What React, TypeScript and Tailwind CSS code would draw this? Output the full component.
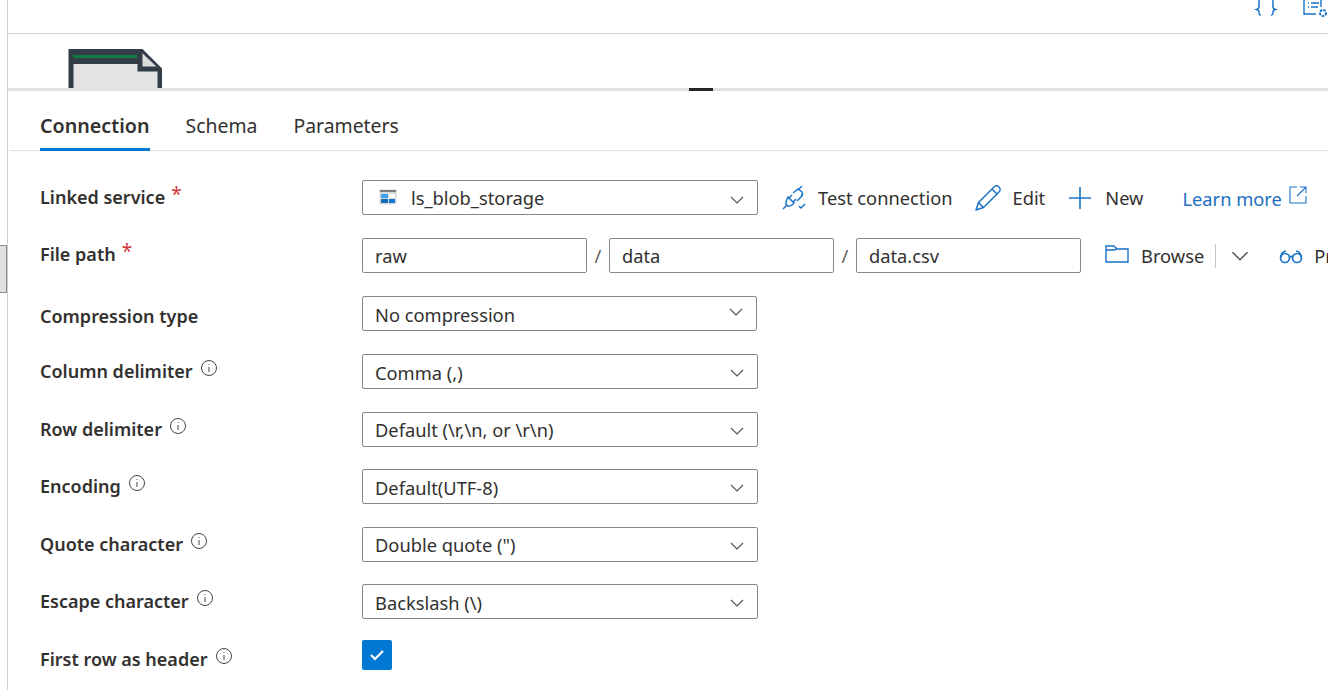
import React from "react";

const Chevron = ({ className = "" }: { className?: string }) => (
  <svg width="14" height="8" viewBox="0 0 14 8" fill="none" stroke="#505050" strokeWidth="1.1" className={`shrink-0 ${className}`}>
    <path d="M1 1l6 6 6-6" />
  </svg>
);

const Info = () => (
  <svg width="18" height="18" viewBox="0 0 18 18" fill="none" stroke="#444" strokeWidth="1">
    <circle cx="9" cy="9" r="7.5" />
    <path d="M9 8v5" />
    <circle cx="9" cy="5.5" r="0.6" fill="#444" stroke="none" />
  </svg>
);

const Select = ({ text, icon, w = "w-[396px]", chevronClass = "mt-[2px]", textClass = "pt-[3px]" }: { text: string; icon?: boolean; w?: string; chevronClass?: string; textClass?: string }) => (
  <div className={`${w} shrink-0 h-[35px] border border-[#8a8886] rounded-[2px] flex items-center pl-[12px] pr-[13px] text-[#323130]`}>
    {icon && (
      <svg width="18" height="16" viewBox="0 0 18 16" className="mr-[14px] ml-[4px] -mt-[2px] shrink-0">
        <rect x="0.5" y="0.5" width="17" height="15" fill="#d9d9d9" />
        <rect x="1" y="1" width="16" height="2" fill="#7a7a7a" />
        <rect x="2" y="5" width="7" height="4" fill="#3aa0e8" />
        <rect x="10" y="5" width="6" height="4" fill="#fff" />
        <rect x="2" y="10" width="7" height="4" fill="#0f6cbd" />
        <rect x="10" y="10" width="6" height="4" fill="#0f78d4" />
      </svg>
    )}
    <span className={`flex-1 whitespace-nowrap ${textClass}`}>{text}</span>
    <Chevron className={chevronClass} />
  </div>
);

const Input = ({ text }: { text: string }) => (
  <div className="w-[225px] shrink-0 h-[35px] border border-[#8a8886] rounded-[2px] flex items-center pl-[12px] pt-[1px] text-[#323130]">{text}</div>
);

const Row = ({ label, info, req, labelClass = "", className = "", children }: { label: string; info?: boolean; req?: boolean; labelClass?: string; className?: string; children: React.ReactNode }) => (
  <div className={`flex items-center h-[35px] ${className}`}>
    <div className={`w-[322px] shrink-0 flex items-center font-semibold text-[18px] text-[#323130] ${labelClass}`}>
      <span className="whitespace-nowrap">{label}</span>
      {req && <span className="text-[#d13438] ml-[6px] -mt-[6px] font-normal text-[19px]">*</span>}
      {info && <span className="ml-[7px] -mt-[7px] flex"><Info /></span>}
    </div>
    {children}
  </div>
);

const Action = ({ icon, label, className = "" }: { icon: React.ReactNode; label: string; className?: string }) => (
  <div className={`flex items-center text-[#323130] whitespace-nowrap shrink-0 ${className}`}>
    {icon}
    <span className="pt-[2px]">{label}</span>
  </div>
);

export default function App() {
  return (
    <div className="flex w-[1328px] h-[690px] overflow-hidden bg-white text-[18.3px] leading-none [font-family:'Noto_Sans','Open_Sans',sans-serif]">
      <div className="w-[7px] shrink-0 pt-[245px]">
        <div className="h-[48px] bg-[#e0e0e0] border border-l-0 border-[#8a8a8a]" />
      </div>
      <div className="flex-1 min-w-0 border-l border-[#cfcfcf] flex flex-col">
        <div className="h-[34px] shrink-0 border-b border-[#d2d2d2] flex justify-end overflow-hidden">
          <svg width="24" height="18" viewBox="0 0 24 18" fill="none" stroke="#1a73c8" strokeWidth="1.5" className="mr-[24px] shrink-0">
            <path d="M7 -1c-2 0-2 1-2 3v5c0 1.500-.7 2-2.500 2.500 1.800.5 2.500 1 2.500 2.500 0 2 0 3 2 3" />
            <path d="M17 -1c2 0 2 1 2 3v5c0 1.500.7 2 2.500 2.500-1.800.5-2.500 1-2.500 2.500 0 2 0 3-2 3" />
          </svg>
          <svg width="26" height="18" viewBox="0 0 26 18" fill="none" stroke="#1a73c8" strokeWidth="1.4" className="shrink-0">
            <path d="M2 -2V14H14" />
            <path d="M19 -2V7" />
            <path d="M6 3H7M9 3H17M6 7H7M9 7H16" />
            <circle cx="21" cy="13" r="3" strokeWidth="2" strokeDasharray="2.500 1" />
          </svg>
        </div>
        <div className="h-[54px] shrink-0 pl-[60px] pt-[15px] overflow-hidden">
          <svg width="94" height="70" viewBox="0 0 94 70">
            <path d="M3 1H72L92 21V70H3Z" fill="#e3e3e3" stroke="#333d47" strokeWidth="5" strokeLinejoin="round" />
            <rect x="1" y="1" width="70" height="14" fill="#333d47" />
            <rect x="5" y="6" width="64" height="3" fill="#107c41" />
            <path d="M72 2V20H91" fill="#dcdcdc" stroke="#333d47" strokeWidth="5" />
          </svg>
        </div>
        <div className="h-[3px] shrink-0 bg-[#e0e0e0] pl-[681px]">
          <div className="w-[24px] h-[3px] bg-[#252525]" />
        </div>
        <div className="h-[60px] shrink-0 ml-[2px] border-b border-[#e1e1e1] flex items-end pl-[30px] gap-[36px] text-[#323130] text-[19.4px]">
          <div className="h-[60px] flex items-center font-semibold text-[19.7px] border-b-[3px] border-[#0078d4] pt-[12px] -mb-[1px]">Connection</div>
          <div className="h-[60px] flex items-center pt-[12px] pb-[0px]">Schema</div>
          <div className="h-[60px] flex items-center pt-[12px] pb-[0px]">Parameters</div>
        </div>
        <div className="pl-[32px] pt-[29px] flex flex-col">
          <Row label="Linked service" req labelClass="-mt-[1px]">
            <Select text="ls_blob_storage" icon chevronClass="mt-[4px]" textClass="pt-[1px]" />
            <div className="flex items-center ml-[24px]">
              <Action
                className="mr-[22px]"
                label="Test connection"
                icon={
                  <svg width="26" height="26" viewBox="0 0 26 26" fill="none" stroke="#1a73c8" strokeWidth="1.5" className="mr-[10px] shrink-0">
                    <path d="M1 24l4-4M20 1l-4 4M6 12l6 6-2 2c-2 1.500-4 1.500-5 .5s-1.500-3-.5-5zM11 8l5-4 4 3c1 2 0 4-1 5l-4 4" />
                    <path d="M10 10l-3 3M14 14l-3 3" />
                    <path d="M17 21l2 2 4-4" />
                  </svg>
                }
              />
              <Action
                className="mr-[23px]"
                label="Edit"
                icon={
                  <svg width="26" height="26" viewBox="0 0 26 26" fill="none" stroke="#1a73c8" strokeWidth="1.5" strokeLinejoin="round" className="mr-[12px] shrink-0">
                    <path d="M1 25l2.500-7.500L19 2c1.500-1.500 3.500-1.500 5 0s1.500 3.500 0 5L8.500 22.500zM3.500 17.500l5 5M17 4l5 5" />
                  </svg>
                }
              />
              <Action
                label="New"
                icon={
                  <svg width="24" height="24" viewBox="0 0 24 24" fill="none" stroke="#1a73c8" strokeWidth="1.6" className="mr-[13px] shrink-0">
                    <path d="M12 1v22M1 12h22" />
                  </svg>
                }
              />
              <div className="flex items-center ml-[39px] text-[#1b6ec2] whitespace-nowrap pt-[4px] shrink-0">
                <span>Learn more</span>
                <svg width="18" height="18" viewBox="0 0 18 18" fill="none" stroke="#1a73c8" strokeWidth="1.1" className="ml-[7px] -mt-[8px] shrink-0">
                  <path d="M8 1H1V17H17V10M11 1H17V7M17 1L8 10" />
                </svg>
              </div>
            </div>
          </Row>
          <Row label="File path" req labelClass="-mt-[3px]" className="mt-[23px]">
            <Input text="raw" />
            <span className="w-[22px] shrink-0 text-center text-[#605e5c] pt-[1px]">/</span>
            <Input text="data" />
            <span className="w-[22px] shrink-0 text-center text-[#605e5c] pt-[1px]">/</span>
            <Input text="data.csv" />
            <Action
              className="ml-[24px]"
              label="Browse"
              icon={
                <svg width="24" height="18" viewBox="0 0 24 18" fill="none" stroke="#1a73c8" strokeWidth="1.4" className="mr-[12px] shrink-0 -mt-[2px]">
                  <path d="M1 17V1H9L12 4H23V17ZM1 5H9L12 4" />
                </svg>
              }
            />
            <div className="w-px h-[24px] bg-[#c8c6c4] ml-[11px] shrink-0" />
            <Chevron className="ml-[17px] scale-125" />
            <svg width="24" height="16" viewBox="0 0 24 16" fill="none" stroke="#1a73c8" strokeWidth="1.7" className="ml-[32px] shrink-0">
              <circle cx="6" cy="10" r="4.500" />
              <circle cx="18" cy="10" r="4.500" />
              <path d="M10.500 9c1-.8 2-.8 3 0M2 9c0-4 3-6 5-6M22 9c0-4-3-6-5-6" />
            </svg>
            <span className="ml-[11px] text-[#323130] pt-[2px]">Preview</span>
          </Row>
          <Row label="Compression type" labelClass="mt-[5px]" className="mt-[23px]">
            <Select text="No compression" w="w-[395px]" chevronClass="-mt-[3px]" />
          </Row>
          <Row label="Column delimiter" info labelClass="-mt-[1px]" className="mt-[23px]">
            <Select text="Comma (,)" />
          </Row>
          <Row label="Row delimiter" info labelClass="-mt-[1px]" className="mt-[23px]">
            <Select text="Default (\r,\n, or \r\n)" textClass="pt-[1px]" />
          </Row>
          <Row label="Encoding" info labelClass="-mt-[1px]" className="mt-[22px]">
            <Select text="Default(UTF-8)" />
          </Row>
          <Row label="Quote character" info labelClass="-mt-[1px]" className="mt-[23px]">
            <Select text={'Double quote (")'} textClass="pt-[1px]" />
          </Row>
          <Row label="Escape character" info labelClass="-mt-[1px]" className="mt-[22px]">
            <Select text="Backslash (\)" />
          </Row>
          <Row label="First row as header" info labelClass="mt-[7px]" className="mt-[19px]">
            <div className="w-[30px] h-[30px] bg-[#0078d4] rounded-[2px] flex items-center justify-center -mt-[1px]">
              <svg width="16" height="14" viewBox="0 0 16 14" fill="none" stroke="#fff" strokeWidth="2.200">
                <path d="M2 7l4 4 8-8" />
              </svg>
            </div>
          </Row>
        </div>
      </div>
    </div>
  );
}
